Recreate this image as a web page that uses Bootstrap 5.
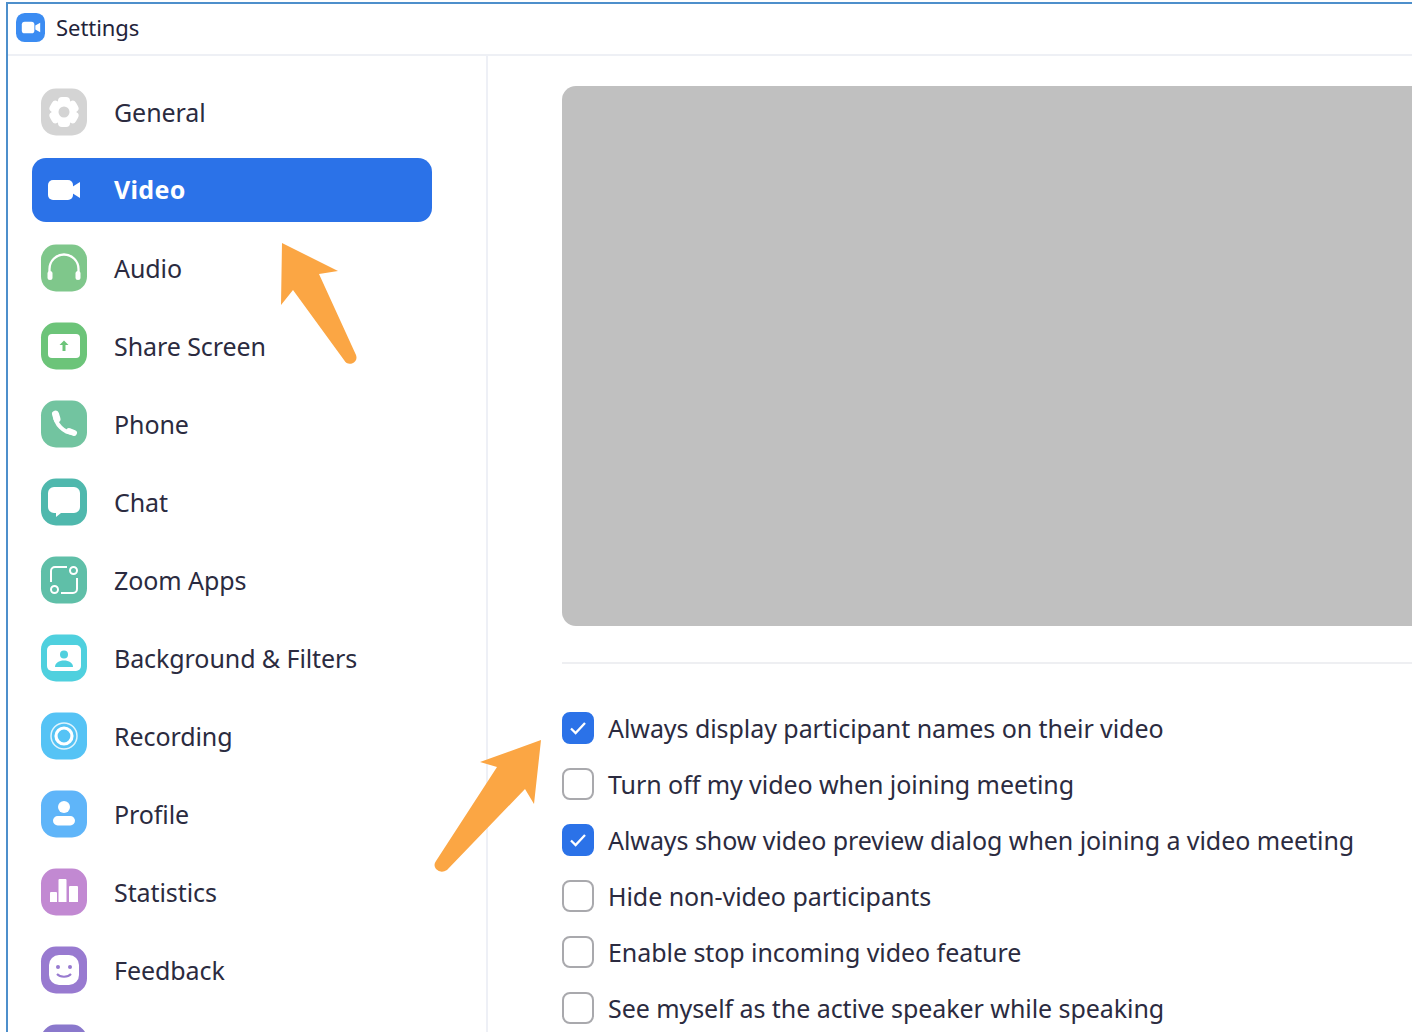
<!DOCTYPE html>
<html lang="en">
<head>
<meta charset="utf-8">
<title>Settings</title>
<link href="https://cdn.jsdelivr.net/npm/bootstrap@5.3.0/dist/css/bootstrap.min.css" rel="stylesheet">
<style>
html,body{height:100%;overflow:hidden;background:#fff}
body{font-family:"Noto Sans","Open Sans",sans-serif;color:#2b2b40;position:relative}
.zwin{margin:2px 0 0 6px;border-top:2px solid #4d8fcb;border-left:2px solid #4d8fcb;width:1500px;height:1100px}
.ztitle{height:52px;border-bottom:2px solid #eef0f5;gap:11px;padding:0 0 3px 8px;font-size:22px;letter-spacing:-.05px;color:#23233a}
.zside{width:480px;flex:none;border-right:2px solid #eef0f6;padding:24px 0 0 24px}
.zitem{height:64px;width:400px;margin-bottom:14px;border-radius:14px;padding:0 0 0 8px;gap:26px;font-size:25px;color:#2b2b40;letter-spacing:-.08px}
.zitem span{padding-top:2px}
.zitem.zactive{background:#2b72e8;color:#fff;font-weight:700;letter-spacing:.3px}
.zitem.zactive span{padding-top:0}
.zitem svg{flex:none;display:block}
.zmain{padding:30px 0 0 74px;width:1000px}
.zpreview{height:540px;background:#c0c0c0;border-radius:14px}
.zrule{height:2px;background:#eeeff2;margin:36px 0 48px;opacity:1;border:0}
.zopt{height:32px;margin:0 0 24px;padding:0;gap:14px;font-size:25px;letter-spacing:-.06px;color:#2b2b40}
.zopt span{padding-top:2px}
.zopt .form-check-input{width:32px;height:32px;margin:0;flex:none;border:2px solid #a9a9ad;border-radius:8px}
.zopt .form-check-input:checked{background-color:#2b72e8;border-color:#2b72e8;background-size:22px;background-image:url("data:image/svg+xml,%3Csvg xmlns='http://www.w3.org/2000/svg' viewBox='0 0 22 22'%3E%3Cpath d='M4 11.500l4.600 4.500L18 6' fill='none' stroke='%23fff' stroke-width='2.300'/%3E%3C/svg%3E")}
.zarrows{position:absolute;left:0;top:0;pointer-events:none}
</style>
</head>
<body>
<div class="zwin">
  <div class="ztitle d-flex align-items-center">
    <svg width="29" height="29" viewBox="0 0 30 30"><rect width="30" height="30" rx="9" fill="#3b8cf2"/><rect x="6" y="9" width="13" height="12" rx="3" fill="#fff"/><path d="M20 13l5-3v10l-5-3z" fill="#fff"/></svg>
    <span>Settings</span>
  </div>
  <div class="d-flex">
    <nav class="zside d-flex flex-column">
      <a class="zitem d-flex align-items-center text-decoration-none">
        <svg width="48" height="48" viewBox="0 0 48 48"><rect x="1" y=".5" width="46" height="47" rx="15" fill="#d4d4d4"/><g fill="#fff"><rect x="18" y="9" width="12" height="30" rx="4"/><rect x="18" y="9" width="12" height="30" rx="4" transform="rotate(60 24 24)"/><rect x="18" y="9" width="12" height="30" rx="4" transform="rotate(120 24 24)"/><circle cx="24" cy="24" r="11"/></g><circle cx="24" cy="24" r="5.500" fill="#d4d4d4"/></svg>
        <span>General</span>
      </a>
      <a class="zitem zactive d-flex align-items-center text-decoration-none">
        <svg width="48" height="48" viewBox="0 0 48 48"><rect x="8" y="14" width="25" height="20" rx="5" fill="#fff"/><path d="M32 21l8-5v16l-8-5z" fill="#fff"/></svg>
        <span>Video</span>
      </a>
      <a class="zitem d-flex align-items-center text-decoration-none">
        <svg width="48" height="48" viewBox="0 0 48 48"><rect x="1" y=".5" width="46" height="47" rx="15" fill="#7fc78b"/><path d="M9.500 30v-5a14.500 14.500 0 0 1 29 0v5" fill="none" stroke="#fff" stroke-width="2.300"/><rect x="7.500" y="27" width="5" height="9" rx="2.500" fill="#fff"/><rect x="35.500" y="27" width="5" height="9" rx="2.500" fill="#fff"/></svg>
        <span>Audio</span>
      </a>
      <a class="zitem d-flex align-items-center text-decoration-none">
        <svg width="48" height="48" viewBox="0 0 48 48"><rect x="1" y=".5" width="46" height="47" rx="15" fill="#6cc479"/><rect x="8" y="12" width="32" height="24" rx="4" fill="#fff"/><path d="M24 18.500l4.500 4.500h-3v6h-3v-6h-3z" fill="#6cc479"/></svg>
        <span>Share Screen</span>
      </a>
      <a class="zitem d-flex align-items-center text-decoration-none">
        <svg width="48" height="48" viewBox="0 0 48 48"><rect x="1" y=".5" width="46" height="47" rx="15" fill="#72c4a0"/><g fill="none" stroke="#fff" stroke-linecap="round"><path d="M15 15c0 9 9 18 18 18" stroke-width="4"/><path d="M15.500 14l1.500 5" stroke-width="7"/><path d="M29 31l5 2" stroke-width="6"/></g></svg>
        <span>Phone</span>
      </a>
      <a class="zitem d-flex align-items-center text-decoration-none">
        <svg width="48" height="48" viewBox="0 0 48 48"><rect x="1" y=".5" width="46" height="47" rx="15" fill="#4fb8ad"/><path d="M14 9h20a6 6 0 0 1 6 6v14a6 6 0 0 1-6 6H21l-5 4v-4h-2a6 6 0 0 1-6-6V15a6 6 0 0 1 6-6z" fill="#fff"/></svg>
        <span>Chat</span>
      </a>
      <a class="zitem d-flex align-items-center text-decoration-none">
        <svg width="48" height="48" viewBox="0 0 48 48"><rect x="1" y=".5" width="46" height="47" rx="15" fill="#5fbfa8"/><g fill="none" stroke="#fff" stroke-width="2"><path d="M27 11H15a4 4 0 0 0-4 4v11"/><path d="M37 22v11a4 4 0 0 1-4 4H21"/><circle cx="33.500" cy="14.500" r="3.500"/><circle cx="14.500" cy="33.500" r="3.500"/></g></svg>
        <span>Zoom Apps</span>
      </a>
      <a class="zitem d-flex align-items-center text-decoration-none">
        <svg width="48" height="48" viewBox="0 0 48 48"><rect x="1" y=".5" width="46" height="47" rx="15" fill="#4fd0de"/><rect x="7" y="11" width="34" height="26" rx="5" fill="#fff"/><circle cx="24" cy="20.500" r="4" fill="#4fd0de"/><path d="M15 33c0-4 4-6.500 9-6.500s9 2.500 9 6.500z" fill="#4fd0de"/></svg>
        <span>Background &amp; Filters</span>
      </a>
      <a class="zitem d-flex align-items-center text-decoration-none">
        <svg width="48" height="48" viewBox="0 0 48 48"><rect x="1" y=".5" width="46" height="47" rx="15" fill="#55c3f5"/><circle cx="24" cy="24" r="13" fill="none" stroke="#dff4fd" stroke-width="1.500"/><circle cx="24" cy="24" r="8" fill="none" stroke="#fff" stroke-width="3.200"/></svg>
        <span>Recording</span>
      </a>
      <a class="zitem d-flex align-items-center text-decoration-none">
        <svg width="48" height="48" viewBox="0 0 48 48"><rect x="1" y=".5" width="46" height="47" rx="15" fill="#5fb5f9"/><circle cx="24" cy="17" r="6" fill="#fff"/><rect x="13" y="26" width="22" height="9.500" rx="4.700" fill="#fff"/></svg>
        <span>Profile</span>
      </a>
      <a class="zitem d-flex align-items-center text-decoration-none">
        <svg width="48" height="48" viewBox="0 0 48 48"><rect x="1" y=".5" width="46" height="47" rx="15" fill="#c289d2"/><path d="M10 25a1 1 0 0 1 1-1h5a1 1 0 0 1 1 1v9h-7zM18.500 12a1 1 0 0 1 1-1h6a1 1 0 0 1 1 1v22h-8zM29 19a1 1 0 0 1 1-1h7a1 1 0 0 1 1 1v15h-9z" fill="#fff"/></svg>
        <span>Statistics</span>
      </a>
      <a class="zitem d-flex align-items-center text-decoration-none">
        <svg width="48" height="48" viewBox="0 0 48 48"><rect x="1" y=".5" width="46" height="47" rx="15" fill="#987ad0"/><rect x="9" y="9" width="30" height="30" rx="10" fill="#fff"/><circle cx="18" cy="21" r="2" fill="#987ad0"/><circle cx="30" cy="21" r="2" fill="#987ad0"/><path d="M17 28c3 3.500 11 3.500 14 0" fill="none" stroke="#987ad0" stroke-width="2"/></svg>
        <span>Feedback</span>
      </a>
      <a class="zitem d-flex align-items-center text-decoration-none">
        <svg width="48" height="48" viewBox="0 0 48 48"><rect x="1" y=".5" width="46" height="47" rx="15" fill="#8a78cc"/></svg>
      </a>
    </nav>
    <main class="zmain">
      <div class="zpreview"></div>
      <hr class="zrule">
      <label class="zopt form-check d-flex align-items-center"><input class="form-check-input" type="checkbox" checked><span>Always display participant names on their video</span></label>
      <label class="zopt form-check d-flex align-items-center"><input class="form-check-input" type="checkbox"><span>Turn off my video when joining meeting</span></label>
      <label class="zopt form-check d-flex align-items-center"><input class="form-check-input" type="checkbox" checked><span>Always show video preview dialog when joining a video meeting</span></label>
      <label class="zopt form-check d-flex align-items-center"><input class="form-check-input" type="checkbox"><span>Hide non-video participants</span></label>
      <label class="zopt form-check d-flex align-items-center"><input class="form-check-input" type="checkbox"><span>Enable stop incoming video feature</span></label>
      <label class="zopt form-check d-flex align-items-center"><input class="form-check-input" type="checkbox"><span>See myself as the active speaker while speaking</span></label>
    </main>
  </div>
</div>
<svg class="zarrows" width="1412" height="1032" viewBox="0 0 1412 1032">
  <path d="M282 243L338 271L319 274L356 355Q358 361 352 363.500Q347 365 344 360L293 290L281 305Z" fill="#fba644"/>
  <path d="M541 740L534 804L525 789L447 870Q441 874 436 869Q433 865 436 861L497 767L480 762Z" fill="#fba644"/>
</svg>
<script src="https://cdn.jsdelivr.net/npm/bootstrap@5.3.0/dist/js/bootstrap.bundle.min.js"></script>
</body>
</html>
